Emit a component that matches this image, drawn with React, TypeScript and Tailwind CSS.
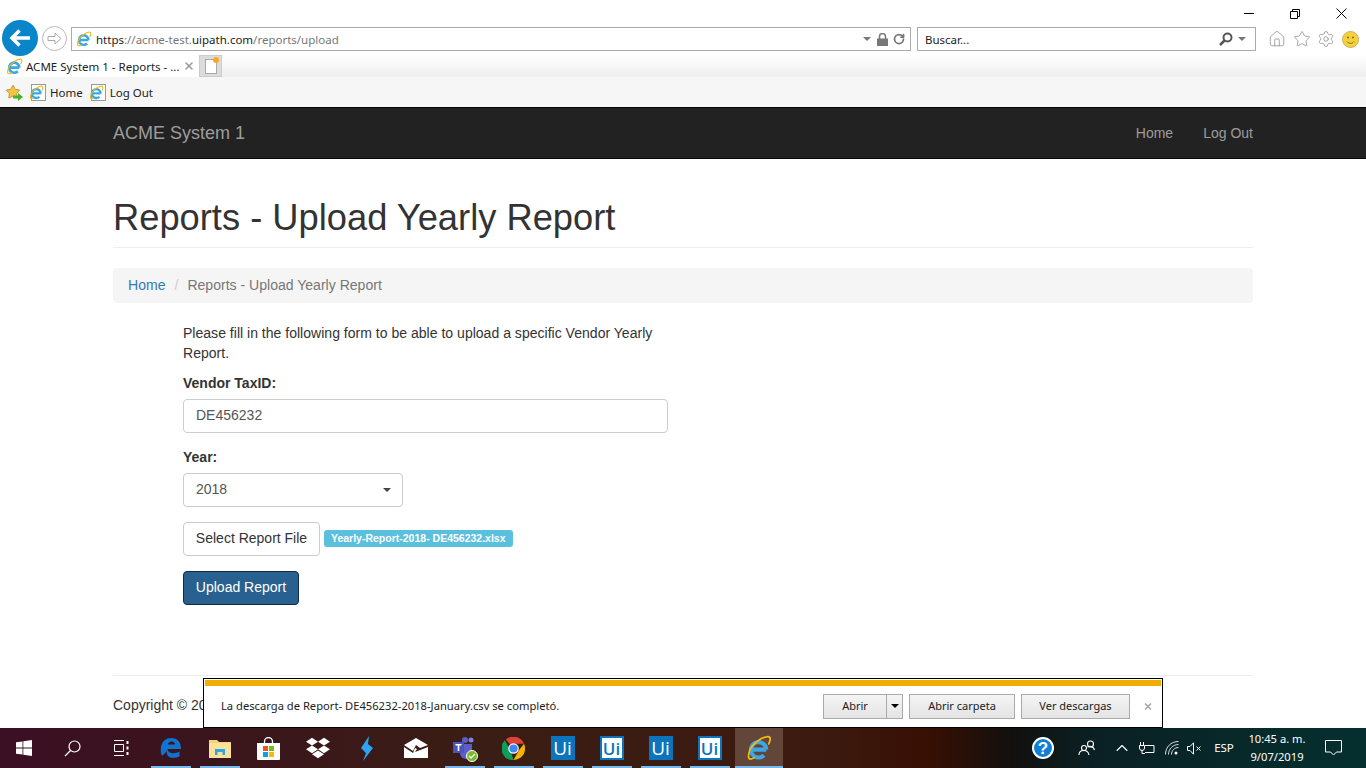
import { FaDropbox } from "react-icons/fa";
import { Home, Star, Settings, RotateCw, ChevronUp, X } from "lucide-react";

const IeIcon = ({ size = 16 }: { size?: number }) => (
  <svg width={size} height={size} viewBox="0 0 32 32" fill="none" className="shrink-0">
    <path d="M8 18h17M25 18a9.500 9.500 0 1 0-2.800 7" stroke="#3ba7e4" strokeWidth="5" />
    <path d="M10 28C3 32 2 28 4 21 7 11 20 2 27 2c4 0 3 5 1 9" stroke="#f2b90f" strokeWidth="2.200" strokeLinecap="round" />
  </svg>
);

const PageIe = () => (
  <span className="relative block h-[17px] w-[15px] shrink-0 border border-[#999] bg-white">
    <span className="absolute -left-[3px] top-0">
      <IeIcon size={15} />
    </span>
  </span>
);

const UiLogo = ({ filled }: { filled: boolean }) =>
  filled ? (
    <div className="flex h-6 w-6 items-center justify-center bg-[#0b74bd] font-['Open_Sans',sans-serif] text-[19px] leading-none text-white">
      Ui
    </div>
  ) : (
    <div className="flex h-6 w-6 items-center justify-center border-2 border-[#0b74bd] bg-white font-['Open_Sans',sans-serif] text-[17px] font-semibold leading-none text-[#0b74bd]">
      Ui
    </div>
  );

const taskItems = [
  {
    on: true,
    icon: (
      <svg width="22" height="22" viewBox="0 0 22 22">
        <path d="M1 10C2 4 6 1 11.500 1 17.500 1 21 5 21 12H7.500c.3 4.500 7 5.500 12 2.500v5C14 22 5.500 21.500 7 14 5 17 3 17.500 2 19 .5 16 .5 13 1 10Zm7-2.500h7c0-4-6.500-4-7 0Z" fill="#0f74d0" />
      </svg>
    ),
  },
  {
    on: true,
    icon: (
      <svg width="22" height="20" viewBox="0 0 22 20">
        <path d="M0 2h8l2 2h12v16H0Z" fill="#f3d27c" />
        <path d="M0 5h22v15H0Z" fill="#fbe29a" />
        <path d="M6 11h10v6h-2.500v-3h-5v3H6Z" fill="#2fa4e7" />
      </svg>
    ),
  },
  {
    on: false,
    icon: (
      <svg width="23" height="23" viewBox="0 0 23 23">
        <path d="M7.500 7V4.500a4 4 0 0 1 8 0V7" fill="none" stroke="#fff" strokeWidth="1.300" />
        <path d="M0 6h23v16a1 1 0 0 1-1 1H1a1 1 0 0 1-1-1Z" fill="#fff" />
        <path d="M6 9h5v5H6Z" fill="#f25022" />
        <path d="M12 9h5v5h-5Z" fill="#7fba00" />
        <path d="M6 15h5v5H6Z" fill="#00a4ef" />
        <path d="M12 15h5v5h-5Z" fill="#ffb900" />
      </svg>
    ),
  },
  { on: false, icon: <FaDropbox size={24} color="#fff" /> },
  {
    on: false,
    icon: (
      <svg width="14" height="25" viewBox="0 0 14 25">
        <path d="M9 0 1 12l5 5-3 8 10-13-5-4Z" fill="#2ea3f2" />
      </svg>
    ),
  },
  {
    on: false,
    icon: (
      <svg width="24" height="20" viewBox="0 0 24 20">
        <path d="M0 7 12 0l12 7-8 3-4-3-3 6Z" fill="#fff" />
        <path d="M0 9l9 6 2-5 2 1-2 3 13-5v11H0Z" fill="#fff" />
      </svg>
    ),
  },
  {
    on: true,
    icon: (
      <span className="relative block h-[24px] w-[24px]">
        <svg width="24" height="24" viewBox="0 0 24 24">
          <circle cx="18" cy="4" r="2.500" fill="#7b83eb" />
          <circle cx="12" cy="4" r="3" fill="#5b5fc7" />
          <path d="M7 8h12v9a6 6 0 0 1-12 0Z" fill="#5b5fc7" />
          <path d="M0 6h11v11H0Z" fill="#4b53bc" />
          <path d="M2.500 8h6v1.500H6.300V15H4.700V9.500H2.500Z" fill="#fff" />
        </svg>
        <span className="absolute -bottom-[2px] -right-[1px] flex h-[12px] w-[12px] items-center justify-center rounded-full border border-white bg-[#7ab929]">
          <svg width="8" height="8" viewBox="0 0 8 8">
            <path d="m1 4 2 2 4-4" stroke="#fff" strokeWidth="1.300" fill="none" />
          </svg>
        </span>
      </span>
    ),
  },
  {
    on: true,
    icon: (
      <svg width="23" height="23" viewBox="0 0 24 24">
        <path d="M12 12 4 2.500A12 12 0 0 1 23 7H12Z" fill="#db4437" />
        <path d="M12 24A12 12 0 0 1 3 3.500L9 14Z" fill="#0f9d58" />
        <path d="M12 24l5.500-10L23 7A12 12 0 0 1 12 24Z" fill="#f4b400" />
        <circle cx="12" cy="12" r="5.500" fill="#fff" />
        <circle cx="12" cy="12" r="4.300" fill="#4285f4" />
      </svg>
    ),
  },
  { on: true, icon: <UiLogo filled /> },
  { on: true, icon: <UiLogo filled={false} /> },
  { on: true, icon: <UiLogo filled /> },
  { on: true, icon: <UiLogo filled={false} /> },
];

const Taskbar = () => (
  <div className="flex h-10 shrink-0 items-stretch bg-[linear-gradient(90deg,#3b0f24_0%,#3a1d14_35%,#3c1a10_60%,#380f03_68%,#12100e_74%,#0a2024_80%,#05302f_100%)] text-white">
    <div className="flex w-12 items-center justify-center">
      <svg width="16" height="16" viewBox="0 0 16 16" fill="#fff">
        <path d="M0 2.300 6.500 1.400v6.200H0ZM7.300 1.300 16 0v7.600H7.300ZM0 8.400h6.500v6.200L0 13.700ZM7.300 8.400H16V16l-8.700-1.300Z" />
      </svg>
    </div>
    <div className="flex w-12 items-center justify-center">
      <svg width="17" height="17" viewBox="0 0 17 17" fill="none" stroke="#fff" strokeWidth="1.200">
        <circle cx="10.500" cy="6.500" r="5.500" />
        <path d="M6.500 10.500 1 16" />
      </svg>
    </div>
    <div className="flex w-[50px] items-center justify-center">
      <svg width="17" height="16" viewBox="0 0 17 16" fill="none" stroke="#fff">
        <path d="M1 .5h10M1 15.500h10M1.500 4.500h9v7h-9Z" />
        <path d="M14.500 1v3M14.500 6.500v3M14.500 12v3" strokeWidth="2" />
      </svg>
    </div>
    <div className="flex">
      {taskItems.map((t, i) => (
        <div key={i} className="relative flex w-[49px] items-center justify-center">
          {t.icon}
          {t.on && <div className="absolute bottom-0 left-[5px] h-[2px] w-10 bg-[#76b9ed]" />}
        </div>
      ))}
      <div className="relative ml-px flex w-[48px] items-center justify-center bg-[#63453a]">
        <IeIcon size={26} />
        <div className="absolute bottom-0 left-0 h-[2px] w-full bg-[#76b9ed]" />
      </div>
    </div>
    <div className="flex-1" />
    <div className="mr-[8px] flex w-6 items-center justify-center">
      <div className="flex h-[22px] w-[22px] items-center justify-center rounded-full border-2 border-white bg-[#0f7fd6] font-['Liberation_Sans',sans-serif] text-[17px] font-bold leading-none">
        ?
      </div>
    </div>
    <div className="flex w-[48px] items-center justify-center">
      <svg width="18" height="16" viewBox="0 0 18 16" fill="none" stroke="#fff" strokeWidth="1.100">
        <circle cx="12.500" cy="4" r="3" />
        <circle cx="6" cy="8" r="2.500" />
        <path d="M1 15c0-6 9-6 10 0M9.500 7c2-1 6-1 7 3" />
      </svg>
    </div>
    <div className="flex w-[22px] items-center justify-center">
      <ChevronUp size={20} strokeWidth={1.300} />
    </div>
    <div className="flex w-[28px] items-center justify-center">
      <svg width="16" height="12" viewBox="0 0 16 12" fill="none" stroke="#fff">
        <path d="M6 3.500h9v7H6" />
        <path d="M1.500 0v3M4.500 0v3M.5 3.500h5v2.500a2 2 0 0 1-5 0ZM3 8v3.500h3" />
      </svg>
    </div>
    <div className="flex w-[22px] items-center justify-center">
      <svg width="14" height="14" viewBox="0 0 14 14" fill="none" stroke="#d8e2e2">
        <path d="M.5 13.500C.5 6 6 .5 13.500.5M3.500 13.500C3.500 8 8 3.500 13.500 3.500M6.500 13.500c0-4 3-7 7-7" />
        <circle cx="11" cy="12" r="1.500" fill="#fff" stroke="none" />
      </svg>
    </div>
    <div className="flex w-[22px] items-center justify-center">
      <svg width="15" height="13" viewBox="0 0 15 13" fill="none" stroke="#fff">
        <path d="M.5 4.500h2.500L6.500.8v11.400L3 8.500H.5Z" />
        <path d="m9.500 4.500 4 4M13.500 4.500l-4 4" />
      </svg>
    </div>
    <div className="flex w-[38px] items-center justify-center font-['Noto_Sans',sans-serif] text-[11.500px]">ESP</div>
    <div className="flex w-[68px] flex-col items-center justify-center font-['Noto_Sans',sans-serif] text-[11.200px] leading-[18px]">
      <span>10:45 a. m.</span>
      <span>9/07/2019</span>
    </div>
    <div className="flex w-[46px] items-center justify-center pr-[2px]">
      <svg width="17" height="16" viewBox="0 0 17 16" fill="none" stroke="#fff">
        <path d="M.5.500h16v11.500h-5l-3 3-3-3h-5Z" />
      </svg>
    </div>
    <div className="w-[9px]" />
  </div>
);

const DownloadBar = () => (
  <div className="absolute bottom-10 left-[203px] h-[50px] w-[960px] border border-black bg-white p-px font-['Noto_Sans',sans-serif] text-[11px] text-[#222]">
    <div className="h-[6px] bg-[#f2ae00]" />
    <div className="flex h-[40px] items-center pl-[16px]">
      <span className="flex-1 text-[11.200px]">La descarga de Report- DE456232-2018-January.csv se completó.</span>
      <div className="flex h-[25px] items-stretch">
        <div className="flex w-[64px] items-center justify-center border border-[#aaa] bg-[linear-gradient(#f4f4f4,#e4e4e4)]">Abrir</div>
        <div className="flex w-4 items-center justify-center border border-l-0 border-[#aaa] bg-[linear-gradient(#f4f4f4,#e4e4e4)]">
          <div className="h-0 w-0 border-x-[4px] border-t-[4px] border-x-transparent border-t-black" />
        </div>
        <div className="ml-[6px] flex w-[106px] items-center justify-center border border-[#aaa] bg-[linear-gradient(#f4f4f4,#e4e4e4)]">Abrir carpeta</div>
        <div className="ml-[6px] flex w-[109px] items-center justify-center border border-[#aaa] bg-[linear-gradient(#f4f4f4,#e4e4e4)]">Ver descargas</div>
      </div>
      <div className="ml-[13px] mr-[8px] flex w-[10px] items-center justify-center">
        <X size={13} strokeWidth={4} color="#a8a8a8" />
      </div>
    </div>
  </div>
);

const BrowserChrome = () => (
  <div className="relative h-[107px] shrink-0 bg-white font-['Noto_Sans',sans-serif] text-[11.500px] text-[#222]">
    <div className="flex h-[27px] items-center justify-end">
      <div className="flex w-[46px] justify-center">
        <div className="h-px w-[10px] bg-black" />
      </div>
      <div className="flex w-[46px] justify-center">
        <svg width="10" height="10" viewBox="0 0 10 10" fill="none" stroke="#000">
          <path d="M.5 2.500h7v7h-7ZM2.500 2.500v-2h7v7h-2" />
        </svg>
      </div>
      <div className="flex w-[46px] justify-center">
        <svg width="11" height="11" viewBox="0 0 11 11" stroke="#000">
          <path d="m.5.500 10 10M10.500.500l-10 10" />
        </svg>
      </div>
      <div className="w-[2px]" />
    </div>
    <div className="flex h-[24px] items-center pl-[71px]">
      <div className="flex h-[24px] w-[840px] items-center border border-[#aaa] pl-[4px] pr-[5px]">
        <IeIcon size={16} />
        <span className="ml-[4px] flex-1 pt-[2px] text-[#777]">
          <span className="text-[#222]">https</span>://acme-test.<span className="text-[#222]">uipath.com</span>/reports/upload
        </span>
        <div className="h-0 w-0 border-x-[4px] border-t-[4px] border-x-transparent border-t-[#777]" />
        <svg width="11" height="13" viewBox="0 0 11 13" className="ml-[6px]">
          <path d="M2.500 6V3.500a3 3 0 0 1 6 0V6" fill="none" stroke="#777" strokeWidth="1.500" />
          <path d="M0 5.500h11V13H0Z" fill="#777" />
        </svg>
        <RotateCw size={12} color="#777" strokeWidth={3.500} className="ml-[5px]" />
      </div>
      <div className="ml-[6px] flex h-[24px] w-[339px] items-center border border-[#aaa] pl-[7px] pr-[9px]">
        <span className="flex-1 pt-[2px]">Buscar...</span>
        <svg width="14" height="14" viewBox="0 0 14 14" fill="none" stroke="#555">
          <circle cx="8.500" cy="5.500" r="4" strokeWidth="2" />
          <path d="M5.500 8.500 1 13" strokeWidth="2.500" />
        </svg>
        <div className="ml-[5px] h-0 w-0 border-x-[4px] border-t-[4px] border-x-transparent border-t-[#777]" />
      </div>
      <div className="ml-[12px] flex items-center gap-[6.500px]">
        <Home size={18} strokeWidth={1} color="#888" />
        <Star size={18} strokeWidth={1} color="#888" />
        <Settings size={18} strokeWidth={1} color="#888" />
        <svg width="17" height="17" viewBox="0 0 17 17">
          <circle cx="8.500" cy="8.500" r="8" fill="#f4d03f" stroke="#c9b25a" />
          <circle cx="6" cy="6.500" r="1" fill="#8a6d00" />
          <circle cx="11" cy="6.500" r="1" fill="#8a6d00" />
          <path d="M5 10.500c2 2.500 5 2.500 7 0" stroke="#8a6d00" fill="none" />
        </svg>
      </div>
    </div>
    <div className="mt-[4px] flex h-[22px] items-stretch">
      <div className="flex w-[199px] shrink-0 items-center bg-white pl-[6px] pr-[4px]">
        <IeIcon size={17} />
        <span className="ml-[3px] flex-1 whitespace-nowrap pt-[2px]">ACME System 1 - Reports - ...</span>
        <X size={12} strokeWidth={3} color="#999" />
      </div>
      <div className="flex w-[23px] shrink-0 items-center justify-center border border-[#ccc] bg-[#dcdcdc]">
        <div className="relative h-[15px] w-[12px] border border-[#aaa] bg-white">
          <div className="absolute -right-[3px] -top-[3px] h-[6px] w-[6px] rounded-full bg-[#f9a825]" />
        </div>
      </div>
      <div className="flex-1 bg-[linear-gradient(#fff,#eee)]" />
    </div>
    <div className="flex h-[30px] items-center bg-[#f6f6f6] pl-[6px]">
      <div className="relative -ml-px">
        <Star size={16} fill="#f5c542" color="#a98b2a" strokeWidth={1.200} />
        <svg width="10" height="8" viewBox="0 0 10 8" className="absolute -bottom-[1px] -right-[2px]">
          <path d="M0 2.500h5V0l5 4-5 4V5.500H0Z" fill="#49b02f" />
        </svg>
      </div>
      <div className="ml-[10px] flex items-center">
        <PageIe />
        <span className="ml-[4px] pt-[2px]">Home</span>
      </div>
      <div className="ml-[8px] flex items-center">
        <PageIe />
        <span className="ml-[4px] pt-[2px]">Log Out</span>
      </div>
    </div>
    <div className="absolute left-[2px] top-[20px] flex h-[36px] w-[36px] items-center justify-center rounded-full bg-[#0985c9]">
      <svg width="22" height="18" viewBox="0 0 22 18" fill="none" stroke="#fff" strokeWidth="3.500">
        <path d="M21 9H4M10.500 1.500 3 9l7.500 7.500" />
      </svg>
    </div>
    <div className="absolute left-[42px] top-[26px] flex h-[25px] w-[25px] items-center justify-center rounded-full border border-[#bbb] bg-white">
      <svg width="15" height="13" viewBox="0 0 15 13" fill="none" stroke="#aaa">
        <path d="M1 4.500h7V1l6 5.500L8 12V8.500H1Z" />
      </svg>
    </div>
  </div>
);

export default function App() {
  return (
    <div className="relative flex h-[768px] w-[1366px] flex-col overflow-hidden bg-white font-['Liberation_Sans',sans-serif] text-[14px] leading-5 text-[#333]">
      <BrowserChrome />
      <nav className="flex h-[52px] shrink-0 items-center justify-between border-y border-[#080808] bg-[#222] px-[113px] text-[#9d9d9d]">
        <span className="text-[18px]">ACME System 1</span>
        <div className="flex gap-[30px]">
          <span>Home</span>
          <span>Log Out</span>
        </div>
      </nav>
      <main className="flex-1 px-[113px]">
        <div className="mt-[39px] border-b border-[#eee] pb-[9px]">
          <h1 className="text-[36.300px] leading-[40px]">Reports - Upload Yearly Report</h1>
        </div>
        <div className="mt-[20px] flex h-[35px] items-center rounded bg-[#f5f5f5] px-[15px] pb-[2px] text-[14.050px]">
          <span className="text-[#337ab7]">Home</span>
          <span className="px-[9px] text-[#ccc]">/</span>
          <span className="text-[#777]">Reports - Upload Yearly Report</span>
        </div>
        <div className="ml-[70px] mt-[20px] w-[485px]">
          <p className="text-[14.050px]">Please fill in the following form to be able to upload a specific Vendor Yearly Report.</p>
          <label className="mt-[10px] block font-bold">Vendor TaxID:</label>
          <div className="mt-[6px] flex h-[34px] items-center rounded border border-[#ccc] px-3 pb-[2px] text-[#555]">DE456232</div>
          <label className="mt-[14px] block font-bold">Year:</label>
          <div className="mt-[6px] flex h-[34px] w-[220px] items-center justify-between rounded border border-[#ccc] px-3 text-[#555]">
            <span className="pb-[2px]">2018</span>
            <div className="-mr-[1px] h-0 w-0 border-x-[4px] border-t-[4px] border-x-transparent border-t-[#444]" />
          </div>
          <div className="mt-[15px] flex items-center">
            <div className="flex h-[34px] w-[137px] items-center justify-center rounded border border-[#ccc] pb-[2px]">Select Report File</div>
            <span className="mb-[2px] ml-[4px] rounded-[3px] bg-[#5bc0de] px-[7px] py-[2px] text-[10.500px] font-bold leading-[13px] text-white">Yearly-Report-2018- DE456232.xlsx</span>
          </div>
          <div className="mt-[15px] flex h-[34px] w-[116px] items-center justify-center rounded border border-[#122b40] bg-[#286090] pb-[2px] text-white">Upload Report</div>
        </div>
        <div className="mt-[70px] border-t border-[#eee] pt-[19px]">Copyright © 2019</div>
      </main>
      <Taskbar />
      <DownloadBar />
    </div>
  );
}
